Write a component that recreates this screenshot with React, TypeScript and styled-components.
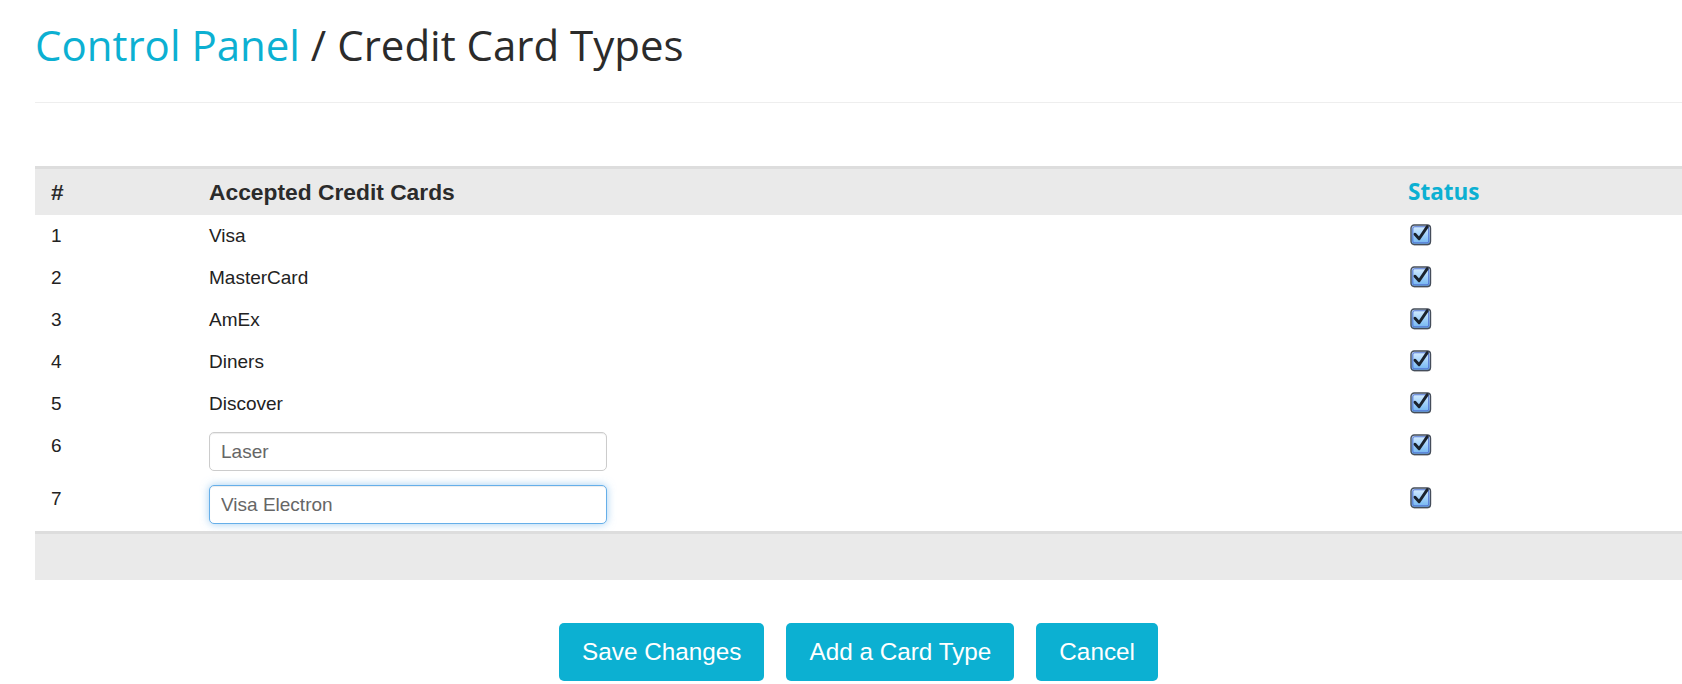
import React, { useId } from "react";
import styled, { createGlobalStyle } from "styled-components";

const GlobalStyle = createGlobalStyle`
  html, body {
    margin: 0;
    padding: 0;
    background: #ffffff;
    overflow: hidden;
  }
  body {
    font-family: "Liberation Sans", Arial, sans-serif;
    color: #333333;
  }
  * { box-sizing: border-box; }
`;

const CYAN = "#0cb0d2";

const Page = styled.div`
  padding: 22px 0 0 35px;
  width: 1682px;
`;

const PageHeader = styled.div`
  padding-bottom: 34px;
  border-bottom: 1px solid #eeeeee;
`;

const Title = styled.h1`
  margin: 0;
  font-family: "Open Sans", sans-serif;
  font-weight: 400;
  font-size: 42px;
  line-height: 46px;
  color: #2b2b2b;
`;

const TitleLink = styled.a`
  color: ${CYAN};
  text-decoration: none;
`;

const Table = styled.table`
  margin-top: 63px;
  width: 100%;
  border-collapse: collapse;
  table-layout: fixed;
  font-size: 19px;
`;

const HeadRow = styled.tr`
  background: #eaeaea;
  border-top: 3px solid #dddddd;
`;

const Th = styled.th<{ $accent?: boolean }>`
  text-align: left;
  padding: 9px 16px;
  height: 46px;
  line-height: 28px;
  font-weight: 700;
  font-family: ${(p) => (p.$accent ? `"Open Sans", sans-serif` : `"Liberation Sans", Arial, sans-serif`)};
  font-size: ${(p) => (p.$accent ? "22.5px" : "22.8px")};
  color: ${(p) => (p.$accent ? CYAN : "#2b2b2b")};
`;

const Td = styled.td`
  padding: 7px 16px;
  line-height: 28px;
  vertical-align: top;
  color: #222222;
`;

const CardInput = styled.input<{ $focused?: boolean }>`
  display: block;
  width: 398px;
  height: 39px;
  padding: 0 11px;
  font-family: "Liberation Sans", Arial, sans-serif;
  font-size: 19px;
  color: #666666;
  background: #ffffff;
  border: 1px solid ${(p) => (p.$focused ? "#66afe9" : "#cccccc")};
  border-radius: 5px;
  outline: none;
  box-shadow: ${(p) =>
    p.$focused
      ? "inset 0 1px 1px rgba(0,0,0,.075), 0 0 8px rgba(102,175,233,.6)"
      : "inset 0 1px 1px rgba(0,0,0,.075)"};
`;

const FootRow = styled.tr`
  background: #eaeaea;
  border-top: 3px solid #dddddd;
`;

const FootCell = styled.td`
  height: 47px;
  padding: 0;
`;

const Actions = styled.div`
  margin-top: 43px;
  display: flex;
  justify-content: center;
  gap: 22px;
`;

const Button = styled.button`
  height: 58px;
  padding: 0 23px;
  border: none;
  border-radius: 5px;
  background: ${CYAN};
  color: #ffffff;
  font-family: "Liberation Sans", Arial, sans-serif;
  font-size: 24.3px;
  cursor: pointer;
`;

const CheckWrap = styled.span`
  display: block;
  width: 22px;
  height: 22px;
  margin: 2px 0 0 2px;
`;

function CheckIcon() {
  const id = useId().replace(/:/g, "");
  return (
    <CheckWrap>
      <svg width="22" height="22" viewBox="0 0 22 22">
        <defs>
          <linearGradient id={`g${id}`} x1="0" y1="0" x2="0" y2="1">
            <stop offset="0" stopColor="#dcf0ff" />
            <stop offset="0.45" stopColor="#a9d5fb" />
            <stop offset="1" stopColor="#6db3ef" />
          </linearGradient>
        </defs>
        <rect x="1" y="2" width="20" height="19.6" rx="3.5" fill="rgba(0,0,0,0.25)" />
        <rect x="1" y="1" width="19.5" height="19.5" rx="3.2" fill={`url(#g${id})`} stroke="#454d5a" strokeWidth="1.4" />
        <rect x="2.8" y="2.8" width="15.9" height="15.9" rx="1.8" fill="none" stroke="#5577d4" strokeWidth="1.1" />
        <path d="M5 10.2 L9.1 14.8 L17.3 2.6" fill="none" stroke="#1b232d" strokeWidth="2.9" strokeLinecap="round" strokeLinejoin="round" />
      </svg>
    </CheckWrap>
  );
}

const cards = ["Visa", "MasterCard", "AmEx", "Diners", "Discover"];
const editable = [
  { value: "Laser", focused: false },
  { value: "Visa Electron", focused: true },
];

export default function App() {
  return (
    <>
      <GlobalStyle />
      <Page>
        <PageHeader>
          <Title>
            <TitleLink href="#">Control Panel</TitleLink> / Credit Card Types
          </Title>
        </PageHeader>

        <Table>
          <colgroup>
            <col style={{ width: 158 }} />
            <col style={{ width: 1199 }} />
            <col />
          </colgroup>
          <thead>
            <HeadRow>
              <Th>#</Th>
              <Th>Accepted Credit Cards</Th>
              <Th $accent>Status</Th>
            </HeadRow>
          </thead>
          <tbody>
            {cards.map((c, i) => (
              <tr key={c}>
                <Td>{i + 1}</Td>
                <Td>{c}</Td>
                <Td>
                  <CheckIcon />
                </Td>
              </tr>
            ))}
            {editable.map((c, i) => (
              <tr key={c.value}>
                <Td>{cards.length + i + 1}</Td>
                <Td>
                  <CardInput defaultValue={c.value} $focused={c.focused} />
                </Td>
                <Td>
                  <CheckIcon />
                </Td>
              </tr>
            ))}
          </tbody>
          <tfoot>
            <FootRow>
              <FootCell colSpan={3} />
            </FootRow>
          </tfoot>
        </Table>

        <Actions>
          <Button>Save Changes</Button>
          <Button>Add a Card Type</Button>
          <Button>Cancel</Button>
        </Actions>
      </Page>
    </>
  );
}
